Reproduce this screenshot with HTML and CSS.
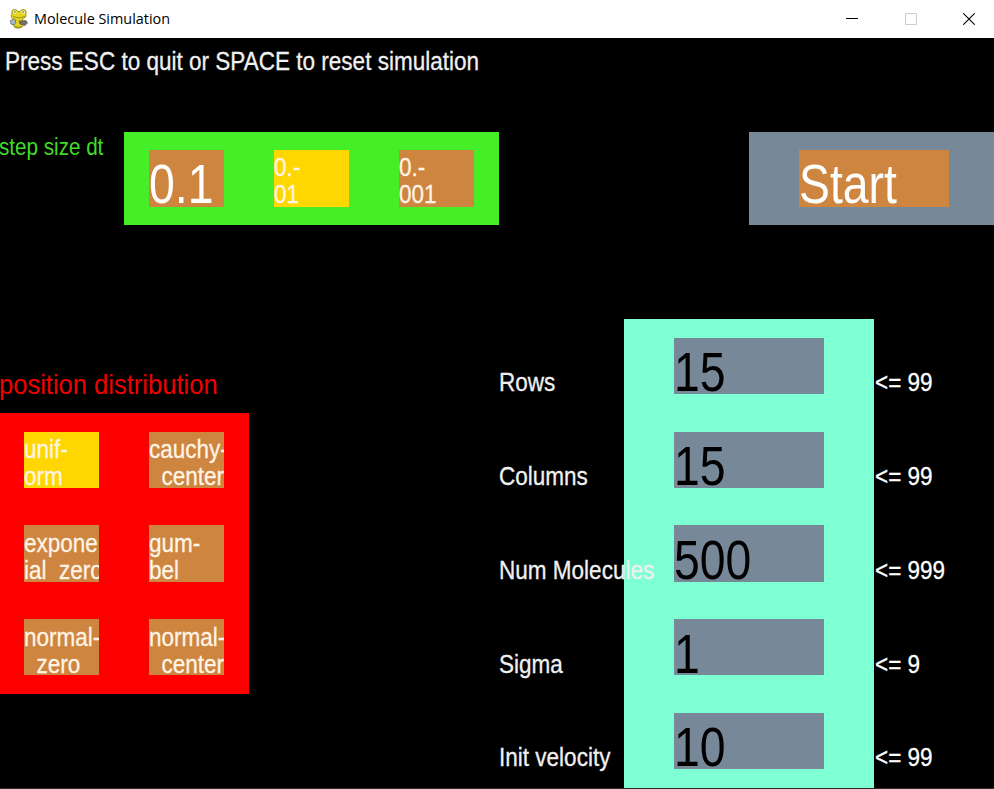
FILE: index.html
```html
<!DOCTYPE html>
<html lang="en">
<head>
<meta charset="utf-8">
<title>Molecule Simulation</title>
<link rel="stylesheet" href="styles.css">
</head>
<body>
<header class="titlebar">
  <svg class="app-icon" width="20" height="22" viewBox="0 0 20 22">
    <path d="M3 6Q2 1.5 5.5 1.5Q8 1.5 9 3.5H11Q12 1 15 1.5Q18 2 17 6Q18 9 14 11L13 12L14.5 15Q14.5 19.5 11 20H7Q4 19.5 5 16L7 12Q2 11 2 8Z" fill="#e5d51d" stroke="#8b8322" stroke-width=".8"/>
    <circle cx="5.7" cy="4.2" r="1.7" fill="#f4efc0"/><circle cx="14.3" cy="4.2" r="1.7" fill="#f4efc0"/>
    <path d="M5.2 4h1.3M13.6 4h1.3" stroke="#333"/>
    <path d="M4 8.5Q10 11.5 16 8.5" fill="none" stroke="#9d941a"/>
    <path d="M1.5 12.5L4.5 11.5L7 14L5 17L2 16Z" fill="#a9bccb" stroke="#5d6469" stroke-width=".8"/>
    <path d="M10 13L17 12.5L18.5 15L16 17.5L11 16Z" fill="#777064" stroke="#5b574c" stroke-width=".7"/>
    <path d="M6 18.5Q9 20.5 12.5 18.5" fill="none" stroke="#8e861c"/>
  </svg>
  <h1 class="title">Molecule Simulation</h1>
  <nav class="controls">
    <svg width="12" height="12" viewBox="0 0 12 12"><path d="M0 5.5h12" stroke="#000"/></svg>
    <svg width="12" height="12" viewBox="0 0 12 12"><path d="M.5 .5h11v11h-11z" fill="none" stroke="#ccc"/></svg>
    <svg width="12" height="12" viewBox="0 0 12 12"><path d="M.3 .3l11.4 11.4M11.7 .3L.3 11.7" stroke="#000" stroke-width="1.1"/></svg>
  </nav>
</header>
<main class="canvas">
  <p class="hint"><span class="text">Press ESC to quit or SPACE to reset simulation</span></p>

  <p class="step-label"><span class="text">step size dt</span></p>
  <section class="panel steps">
    <button class="option big"><span class="text">0.1</span></button>
    <button class="option selected"><span class="text">0.-
01</span></button>
    <button class="option"><span class="text">0.-
001</span></button>
  </section>

  <section class="panel start">
    <button class="option big"><span class="text">Start</span></button>
  </section>

  <p class="dist-label"><span class="text">position distribution</span></p>
  <section class="panel dist">
    <button class="option selected"><span class="text">unif-
orm</span></button>
    <button class="option"><span class="text">cauchy-
  center</span></button>
    <button class="option"><span class="text">expone
ial  zero</span></button>
    <button class="option"><span class="text">gum-
bel</span></button>
    <button class="option"><span class="text">normal-
  zero</span></button>
    <button class="option"><span class="text">normal-
  center</span></button>
  </section>

  <section class="panel fields">
    <div class="option big field"><span class="text">15</span></div>
    <div class="option big field"><span class="text">15</span></div>
    <div class="option big field"><span class="text">500</span></div>
    <div class="option big field"><span class="text">1</span></div>
    <div class="option big field"><span class="text">10</span></div>
  </section>
  <div class="labels names">
    <span class="text">Rows</span><span class="text">Columns</span><span class="text">Num Molecules</span><span class="text">Sigma</span><span class="text">Init velocity</span>
  </div>
  <div class="labels limits">
    <span class="text">&lt;= 99</span><span class="text">&lt;= 99</span><span class="text">&lt;= 999</span><span class="text">&lt;= 9</span><span class="text">&lt;= 99</span>
  </div>
</main>
</body>
</html>
```
FILE: styles.css
```css
* { box-sizing: border-box; }

body {
  margin: 0;
  height: 789px;
  overflow: hidden;
  background: #2b2726;
  font-family: "Liberation Sans", Arial, sans-serif;
}

.titlebar {
  display: flex;
  align-items: center;
  height: 37.9px;
  padding: 0 19px 0 9px;
  background: #fff;
}

.title {
  margin: 0 auto 0 5px;
  font: 400 14.4px/20px "Open Sans", "Noto Sans", sans-serif;
  color: #000;
}

.controls { display: flex; gap: 46.5px; }

.canvas {
  display: grid;
  grid-template-columns: repeat(8, 125px);
  grid-template-rows: repeat(8, 93.75px);
  width: 1000px;
  margin-left: -1px;
  background: #000;
  color: #f0f0f0;
}

.canvas p { margin: 0; }

.text {
  display: block;
  width: max-content;
  font-size: 26.5px;
  line-height: 27.3px;
  white-space: pre;
  transform: scaleX(.85);
  transform-origin: 0 0;
  -webkit-text-stroke: .3px currentColor;
}

.hint { grid-area: 1 / 1 / 2 / 5; padding: 10.4px 0 0 6px; }
.step-label { grid-area: 2 / 1; padding-top: .5px; color: #40dc26; }
.step-label .text { font-size: 23px; line-height: 31.4px; transform: scaleX(.897); -webkit-text-stroke: 0; }
.dist-label { grid-area: 4 / 1 / 5 / 4; padding-top: 50.3px; color: #f00000; }
.dist-label .text { font-size: 28.5px; line-height: 31.4px; transform: scaleX(.896); -webkit-text-stroke: 0; }

.panel { display: grid; }
.steps { grid-area: 2 / 2 / 3 / 5; grid-template-columns: repeat(3, 1fr); background: #46ee28; }
.start { grid-area: 2 / 7 / 3 / 9; background: #778899; }
.dist { grid-area: 5 / 1 / 8 / 3; grid-template-columns: 1fr 1fr; background: #f00; }
.fields { grid-area: 4 / 6 / 9 / 8; background: #7fffd4; }

.option {
  display: flex;
  align-items: flex-start;
  height: 56.25px;
  margin: 18.75px 25px;
  padding: 4.4px 0 0;
  border: 0;
  overflow: hidden;
  background: #cd853f;
  color: #fff4e6;
  font-family: inherit;
  text-align: left;
}

.steps .option { padding-top: 3.6px; }
.selected { background: #ffd700; }
.start .option, .fields .option { margin: 18.75px 50px; }
.panel .big { padding-top: 6px; color: #fff; }
.big .text { font-size: 55px; line-height: 56.25px; transform: scaleX(.843); -webkit-text-stroke: 0; }
.panel .field { padding: 6.4px 0 0 .4px; background: #778899; color: #000; }

.labels { display: grid; grid-auto-rows: 93.75px; }
.labels .text { padding-top: 50.2px; }
.limits .text { color: #fff; }
.names { grid-area: 4 / 5 / 9 / 7; }
.limits { grid-area: 4 / 8 / 9 / 9; padding-left: .7px; }
```
